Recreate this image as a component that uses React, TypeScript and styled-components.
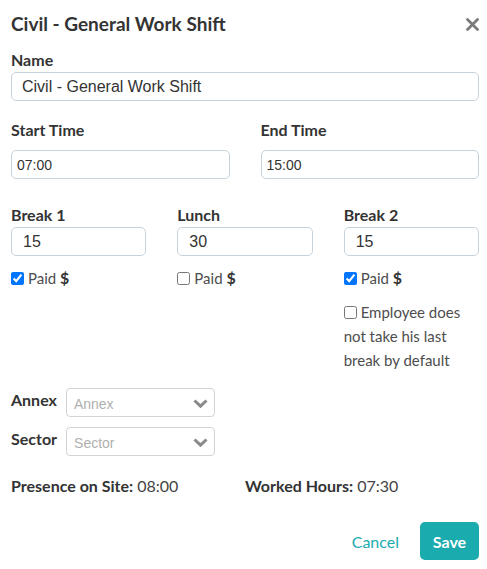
import React from "react";
import styled, { createGlobalStyle } from "styled-components";

const Global = createGlobalStyle`
  html, body { margin: 0; padding: 0; background: #fff; }
  body { font-family: Lato, "Noto Sans", sans-serif; color: #333; }
  * { box-sizing: border-box; }
`;

const Modal = styled.div`
  width: 487px;
  padding: 13px 8px 8px 11px;
`;

const Header = styled.div`
  display: flex;
  justify-content: space-between;
  align-items: center;
  height: 22px;
`;

const Title = styled.h1`
  margin: 0;
  font-size: 19px;
  line-height: 22px;
  font-weight: 700;
  color: #333;
`;

const Close = styled.button`
  border: 0;
  background: none;
  padding: 0;
  width: 13px;
  height: 13px;
  display: flex;
  cursor: pointer;
`;

const Field = styled.div<{ $top: number }>`
  display: flex;
  flex-direction: column;
  margin-top: ${(p) => p.$top}px;
  min-width: 0;
`;

const Label = styled.label<{ $gap?: number }>`
  font-size: 16px;
  line-height: 18px;
  font-weight: 700;
  color: #333;
  margin-bottom: ${(p) => p.$gap ?? 3}px;
`;

const TextInput = styled.input<{ $size?: number; $pad?: number }>`
  height: 29px;
  width: 100%;
  border: 1px solid #c6d3dc;
  border-radius: 5px;
  padding: 0 ${(p) => p.$pad ?? 10}px;
  font-family: "Liberation Sans", Arial, sans-serif;
  font-size: ${(p) => p.$size ?? 16}px;
  color: #333;
  outline: none;
`;

const Row = styled.div<{ $cols: number; $top: number }>`
  display: grid;
  grid-template-columns: repeat(${(p) => p.$cols}, 1fr);
  column-gap: 31px;
  margin-top: ${(p) => p.$top}px;
`;

const Col = styled.div`
  display: flex;
  flex-direction: column;
  min-width: 0;
`;

const Check = styled.label<{ $top: number }>`
  display: block;
  margin-top: ${(p) => p.$top}px;
  font-size: 15px;
  line-height: 24px;
  color: #4d4d4d;
  input {
    width: 13px;
    height: 13px;
    margin: 0 4px 0 0;
    vertical-align: -1px;
  }
  b { color: #333; font-size: 16px; }
`;

const SelectRow = styled.div<{ $top: number }>`
  display: flex;
  align-items: flex-start;
  gap: 9px;
  margin-top: ${(p) => p.$top}px;
`;

const SelectLabel = styled.span`
  font-size: 16px;
  line-height: 18px;
  font-weight: 700;
  color: #333;
  margin-top: 3px;
`;

const SelectBox = styled.div`
  width: 149px;
  height: 29px;
  border: 1px solid #d3d3d3;
  border-radius: 4px;
  display: flex;
  align-items: center;
  justify-content: space-between;
  padding: 2px 6px 0 7px;
`;

const Placeholder = styled.span`
  font-family: "Liberation Sans", Arial, sans-serif;
  font-size: 14px;
  color: #b0b0b0;
`;

const Summary = styled.div`
  display: grid;
  grid-template-columns: 1fr 1fr;
  margin-top: 21px;
  font-size: 16px;
  line-height: 18px;
  color: #444;
  b { color: #333; }
`;

const Footer = styled.div`
  display: flex;
  justify-content: flex-end;
  align-items: center;
  gap: 21px;
  margin-top: 27px;
`;

const LinkButton = styled.button`
  border: 0;
  background: none;
  padding: 0;
  font-family: Lato, sans-serif;
  font-size: 16px;
  color: #19abae;
  cursor: pointer;
`;

const PrimaryButton = styled.button`
  border: 0;
  height: 38px;
  width: 59px;
  border-radius: 5px;
  background: #19abae;
  color: #fff;
  font-family: Lato, sans-serif;
  font-weight: 700;
  font-size: 16px;
  cursor: pointer;
`;

const Chevron = () => (
  <svg width="15" height="9" viewBox="0 0 15 9">
    <path d="M1.5 1.5 L7.5 7.2 L13.5 1.5" fill="none" stroke="#8a8a8a" strokeWidth="3" />
  </svg>
);

const Select = ({ label, placeholder }: { label: string; placeholder: string }) => (
  <>
    <SelectLabel>{label}</SelectLabel>
    <SelectBox>
      <Placeholder>{placeholder}</Placeholder>
      <Chevron />
    </SelectBox>
  </>
);

export default function App() {
  return (
    <>
      <Global />
      <Modal>
        <Header>
          <Title>Civil - General Work Shift</Title>
          <Close aria-label="close">
            <svg width="13" height="13" viewBox="0 0 13 13">
              <path d="M1.5 1.5 L11.5 11.5 M11.5 1.5 L1.5 11.5" stroke="#7a7a7a" strokeWidth="2.8" strokeLinecap="round" />
            </svg>
          </Close>
        </Header>

        <Field $top={16}>
          <Label>Name</Label>
          <TextInput defaultValue="Civil - General Work Shift" $pad={10} />
        </Field>

        <Row $cols={2} $top={20}>
          <Col>
            <Label $gap={11}>Start Time</Label>
            <TextInput defaultValue="07:00" $size={14} $pad={5} />
          </Col>
          <Col>
            <Label $gap={11}>End Time</Label>
            <TextInput defaultValue="15:00" $size={14} $pad={5} />
          </Col>
        </Row>

        <Row $cols={3} $top={27}>
          <Col>
            <Label>Break 1</Label>
            <TextInput defaultValue="15" $pad={11} />
            <Check $top={10}>
              <input type="checkbox" defaultChecked />
              Paid <b>$</b>
            </Check>
          </Col>
          <Col>
            <Label>Lunch</Label>
            <TextInput defaultValue="30" $pad={11} />
            <Check $top={10}>
              <input type="checkbox" />
              Paid <b>$</b>
            </Check>
          </Col>
          <Col>
            <Label>Break 2</Label>
            <TextInput defaultValue="15" $pad={11} />
            <Check $top={10}>
              <input type="checkbox" defaultChecked />
              Paid <b>$</b>
            </Check>
            <Check $top={10}>
              <input type="checkbox" />
              Employee does not take his last break by default
            </Check>
          </Col>
        </Row>

        <SelectRow $top={16}>
          <Select label="Annex" placeholder="Annex" />
        </SelectRow>
        <SelectRow $top={10}>
          <Select label="Sector" placeholder="Sector" />
        </SelectRow>

        <Summary>
          <div>
            <b>Presence on Site:</b> 08:00
          </div>
          <div>
            <b>Worked Hours:</b> 07:30
          </div>
        </Summary>

        <Footer>
          <LinkButton>Cancel</LinkButton>
          <PrimaryButton>Save</PrimaryButton>
        </Footer>
      </Modal>
    </>
  );
}
